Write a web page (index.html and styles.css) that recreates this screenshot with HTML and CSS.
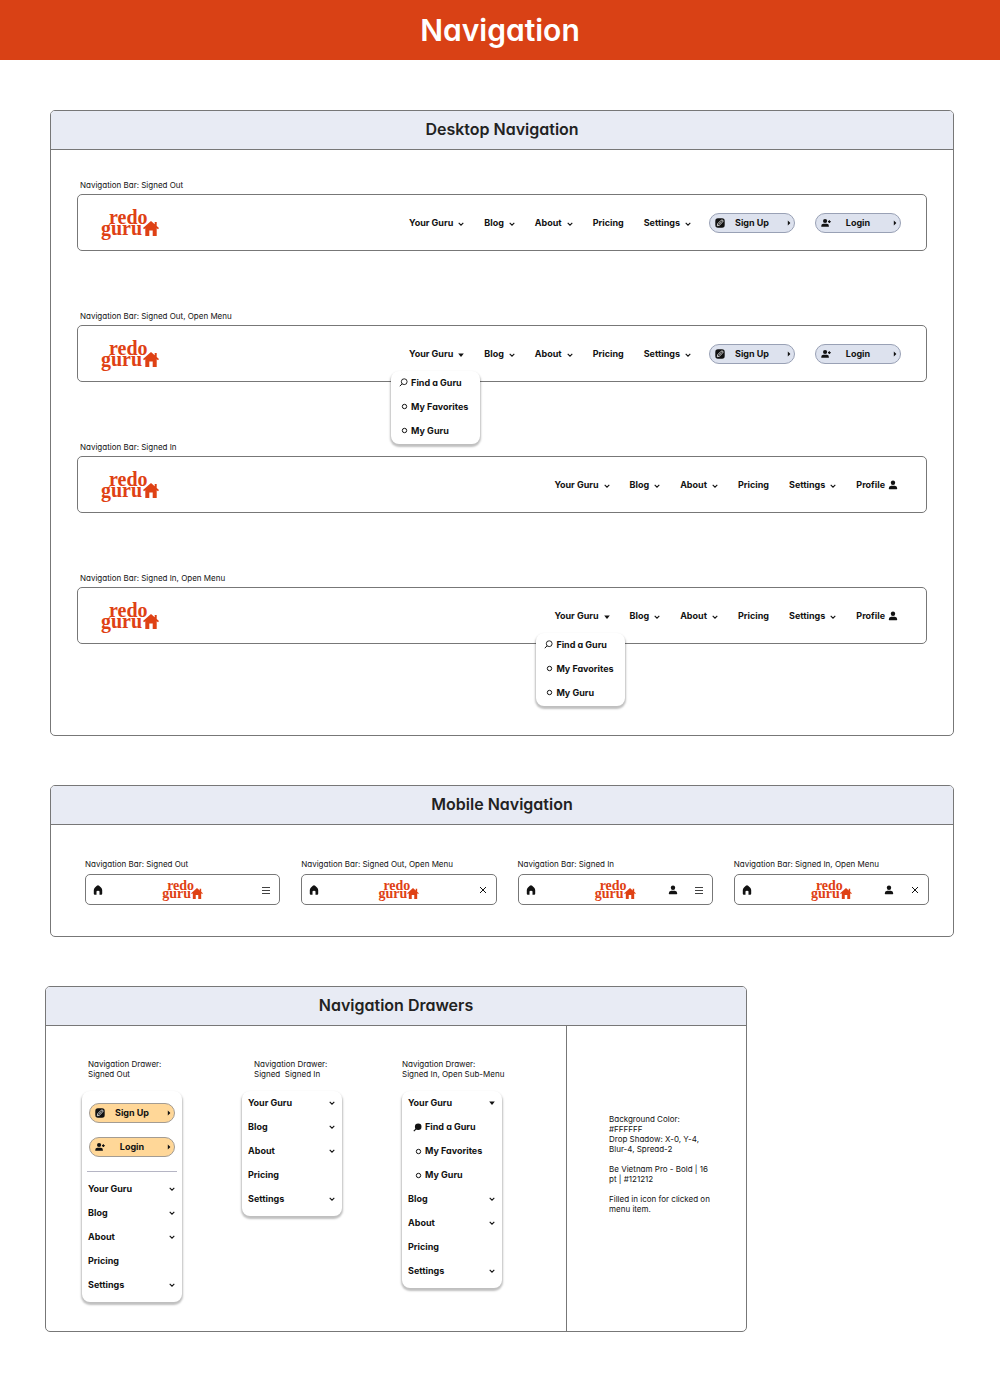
FILE: index.html
```html
<!DOCTYPE html>
<html lang="en">
<head>
<meta charset="utf-8">
<meta name="viewport" content="width=device-width, initial-scale=1">
<title>Navigation</title>
<link rel="stylesheet" href="styles.css">
</head>
<body>
<svg class="sprite" aria-hidden="true">
  <symbol id="chevron" viewBox="0 0 6 6"><path d="M.7 1.8 3 4.2 5.3 1.8" fill="none" stroke="currentColor" stroke-width="1.1"/></symbol>
  <symbol id="caret" viewBox="0 0 6 6"><path d="M.2 1.5h5.6L3 5z" fill="currentColor"/></symbol>
  <symbol id="arrow" viewBox="0 0 4 6"><path d="M.8.6 3.4 3 .8 5.4z" fill="currentColor"/></symbol>
  <symbol id="house" viewBox="0 0 16 15"><path d="M8 0 0 7l1 1.2L2.300 7.200V15h4V9.500h3.400V15h4V7.200L15 8.200 16 7l-2.300-2V1h-2v2.300z" fill="currentColor"/></symbol>
  <symbol id="home" viewBox="0 0 10 10"><path d="M5 .2Q5.800.2 8 2.500 9.200 3.600 9.200 5v3.800q0 1-1 1H6.500V6.500Q6.500 5.800 5 5.800T3.500 6.500v3.300H1.800q-1 0-1-1V5Q.8 3.600 2 2.500 4.200.2 5 .2z" fill="currentColor"/></symbol>
  <symbol id="user" viewBox="0 0 10 10"><circle cx="5" cy="2.800" r="2.200" fill="currentColor"/><path d="M.8 8.200Q.8 5.700 3.200 5.700h3.600q2.400 0 2.400 2.500v.4q0 .6-.6.6H1.400q-.6 0-.6-.6z" fill="currentColor"/></symbol>
  <symbol id="user-add" viewBox="0 0 11 10"><circle cx="4.500" cy="2.800" r="2.300" fill="currentColor"/><path d="M.3 8.200Q.3 5.700 2.700 5.700h3.600q2.400 0 2.400 2.500v.4q0 .6-.6.6H.9q-.6 0-.6-.6z" fill="currentColor"/><path d="M9.200 1.900v3M7.700 3.400h3" stroke="currentColor" stroke-width="1.300"/></symbol>
  <symbol id="edit" viewBox="0 0 10 10"><rect x=".3" y=".3" width="9.400" height="9.400" rx="2.600" fill="currentColor"/><path d="M2.300 7.700 2.800 5.600 6.200 2.200Q7 1.500 7.800 2.300T7.800 3.800L4.400 7.200z" fill="none" stroke="#fff" stroke-width=".8"/><path d="M3.800 6.200 6.500 3.500" stroke="#fff" stroke-width=".5"/></symbol>
  <symbol id="search" viewBox="0 0 9 9"><circle cx="5.200" cy="3.700" r="2.900" fill="none" stroke="currentColor" stroke-width=".9"/><path d="M3.100 5.800.8 8.200" stroke="currentColor" stroke-width="1"/></symbol>
  <symbol id="search-filled" viewBox="0 0 9 9"><circle cx="5.200" cy="3.700" r="3.300" fill="currentColor"/><path d="M3.100 5.800.8 8.200" stroke="currentColor" stroke-width="1.200"/></symbol>
  <symbol id="ring" viewBox="0 0 9 9"><circle cx="5.500" cy="4.500" r="2.200" fill="none" stroke="currentColor" stroke-width="1"/></symbol>
  <symbol id="menu" viewBox="0 0 10 10"><path d="M1 2.500h8M1 5.500h8M1 8.500h8" stroke="currentColor" stroke-width=".8"/></symbol>
  <symbol id="close" viewBox="0 0 10 10"><path d="m2 2 6 6M8 2 2 8" stroke="currentColor" stroke-width="1"/></symbol>
</svg>

<header class="banner"><h1>Navigation</h1></header>

<main class="board">
  <section class="panel panel--wide">
    <h2>Desktop Navigation</h2>
    <div class="desktop">
      <article class="sample">
        <h3>Navigation Bar: Signed Out</h3>
        <nav class="bar">
          <a class="logo" href="#"><span>redo<br>guru</span><svg><use href="#house"/></svg></a>
          <ul class="links">
            <li><button class="item">Your Guru <svg><use href="#chevron"/></svg></button></li>
            <li><button class="item">Blog <svg><use href="#chevron"/></svg></button></li>
            <li><button class="item">About <svg><use href="#chevron"/></svg></button></li>
            <li><a class="item" href="#">Pricing</a></li>
            <li><button class="item">Settings <svg><use href="#chevron"/></svg></button></li>
          </ul>
          <div class="actions">
            <button class="pill"><svg><use href="#edit"/></svg><span>Sign Up</span><svg class="go"><use href="#arrow"/></svg></button>
            <button class="pill"><svg><use href="#user-add"/></svg><span>Login</span><svg class="go"><use href="#arrow"/></svg></button>
          </div>
        </nav>
      </article>
      <article class="sample">
        <h3>Navigation Bar: Signed Out, Open Menu</h3>
        <nav class="bar">
          <a class="logo" href="#"><span>redo<br>guru</span><svg><use href="#house"/></svg></a>
          <ul class="links">
            <li><button class="item" aria-expanded="true">Your Guru <svg><use href="#caret"/></svg></button>
              <ul class="dropdown">
                <li><a href="#"><svg><use href="#search"/></svg>Find a Guru</a></li>
                <li><a href="#"><svg><use href="#ring"/></svg>My Favorites</a></li>
                <li><a href="#"><svg><use href="#ring"/></svg>My Guru</a></li>
              </ul>
            </li>
            <li><button class="item">Blog <svg><use href="#chevron"/></svg></button></li>
            <li><button class="item">About <svg><use href="#chevron"/></svg></button></li>
            <li><a class="item" href="#">Pricing</a></li>
            <li><button class="item">Settings <svg><use href="#chevron"/></svg></button></li>
          </ul>
          <div class="actions">
            <button class="pill"><svg><use href="#edit"/></svg><span>Sign Up</span><svg class="go"><use href="#arrow"/></svg></button>
            <button class="pill"><svg><use href="#user-add"/></svg><span>Login</span><svg class="go"><use href="#arrow"/></svg></button>
          </div>
        </nav>
      </article>
      <article class="sample">
        <h3>Navigation Bar: Signed In</h3>
        <nav class="bar">
          <a class="logo" href="#"><span>redo<br>guru</span><svg><use href="#house"/></svg></a>
          <ul class="links">
            <li><button class="item">Your Guru <svg><use href="#chevron"/></svg></button></li>
            <li><button class="item">Blog <svg><use href="#chevron"/></svg></button></li>
            <li><button class="item">About <svg><use href="#chevron"/></svg></button></li>
            <li><a class="item" href="#">Pricing</a></li>
            <li><button class="item">Settings <svg><use href="#chevron"/></svg></button></li>
            <li><a class="item profile" href="#">Profile <svg><use href="#user"/></svg></a></li>
          </ul>
        </nav>
      </article>
      <article class="sample">
        <h3>Navigation Bar: Signed In, Open Menu</h3>
        <nav class="bar">
          <a class="logo" href="#"><span>redo<br>guru</span><svg><use href="#house"/></svg></a>
          <ul class="links">
            <li><button class="item" aria-expanded="true">Your Guru <svg><use href="#caret"/></svg></button>
              <ul class="dropdown">
                <li><a href="#"><svg><use href="#search"/></svg>Find a Guru</a></li>
                <li><a href="#"><svg><use href="#ring"/></svg>My Favorites</a></li>
                <li><a href="#"><svg><use href="#ring"/></svg>My Guru</a></li>
              </ul>
            </li>
            <li><button class="item">Blog <svg><use href="#chevron"/></svg></button></li>
            <li><button class="item">About <svg><use href="#chevron"/></svg></button></li>
            <li><a class="item" href="#">Pricing</a></li>
            <li><button class="item">Settings <svg><use href="#chevron"/></svg></button></li>
            <li><a class="item profile" href="#">Profile <svg><use href="#user"/></svg></a></li>
          </ul>
        </nav>
      </article>
    </div>
  </section>

  <section class="panel panel--wide">
    <h2>Mobile Navigation</h2>
    <div class="mobile">
      <article>
        <h3>Navigation Bar: Signed Out</h3>
        <nav class="phone-bar">
          <a class="icon" href="#" aria-label="Home"><svg><use href="#home"/></svg></a>
          <a class="logo logo--small" href="#"><span>redo<br>guru</span><svg><use href="#house"/></svg></a>
          <div class="tools"><button class="icon" aria-label="Open menu"><svg><use href="#menu"/></svg></button></div>
        </nav>
      </article>
      <article>
        <h3>Navigation Bar: Signed Out, Open Menu</h3>
        <nav class="phone-bar">
          <a class="icon" href="#" aria-label="Home"><svg><use href="#home"/></svg></a>
          <a class="logo logo--small" href="#"><span>redo<br>guru</span><svg><use href="#house"/></svg></a>
          <div class="tools"><button class="icon" aria-label="Close menu"><svg><use href="#close"/></svg></button></div>
        </nav>
      </article>
      <article>
        <h3>Navigation Bar: Signed In</h3>
        <nav class="phone-bar">
          <a class="icon" href="#" aria-label="Home"><svg><use href="#home"/></svg></a>
          <a class="logo logo--small" href="#"><span>redo<br>guru</span><svg><use href="#house"/></svg></a>
          <div class="tools"><a class="icon" href="#" aria-label="Profile"><svg><use href="#user"/></svg></a><button class="icon" aria-label="Open menu"><svg><use href="#menu"/></svg></button></div>
        </nav>
      </article>
      <article>
        <h3>Navigation Bar: Signed In, Open Menu</h3>
        <nav class="phone-bar">
          <a class="icon" href="#" aria-label="Home"><svg><use href="#home"/></svg></a>
          <a class="logo logo--small" href="#"><span>redo<br>guru</span><svg><use href="#house"/></svg></a>
          <div class="tools"><a class="icon" href="#" aria-label="Profile"><svg><use href="#user"/></svg></a><button class="icon" aria-label="Close menu"><svg><use href="#close"/></svg></button></div>
        </nav>
      </article>
    </div>
  </section>

  <section class="panel panel--drawers">
    <h2>Navigation Drawers</h2>
    <div class="split">
      <div class="drawers">
        <article>
          <h3 class="inset">Navigation Drawer:<br>Signed Out</h3>
          <nav class="drawer">
            <div class="signin">
              <button class="pill pill--warm"><svg><use href="#edit"/></svg><span>Sign Up</span><svg class="go"><use href="#arrow"/></svg></button>
              <button class="pill pill--warm"><svg><use href="#user-add"/></svg><span>Login</span><svg class="go"><use href="#arrow"/></svg></button>
            </div>
            <ul>
              <li><button class="row">Your Guru <svg><use href="#chevron"/></svg></button></li>
              <li><button class="row">Blog <svg><use href="#chevron"/></svg></button></li>
              <li><button class="row">About <svg><use href="#chevron"/></svg></button></li>
              <li><a class="row" href="#">Pricing</a></li>
              <li><button class="row">Settings <svg><use href="#chevron"/></svg></button></li>
            </ul>
          </nav>
        </article>
        <article>
          <h3 class="inset-large">Navigation Drawer:<br>Signed&nbsp; Signed In</h3>
          <nav class="drawer">
            <ul>
              <li><button class="row">Your Guru <svg><use href="#chevron"/></svg></button></li>
              <li><button class="row">Blog <svg><use href="#chevron"/></svg></button></li>
              <li><button class="row">About <svg><use href="#chevron"/></svg></button></li>
              <li><a class="row" href="#">Pricing</a></li>
              <li><button class="row">Settings <svg><use href="#chevron"/></svg></button></li>
            </ul>
          </nav>
        </article>
        <article>
          <h3>Navigation Drawer:<br>Signed In, Open Sub-Menu</h3>
          <nav class="drawer">
            <ul>
              <li><button class="row" aria-expanded="true">Your Guru <svg><use href="#caret"/></svg></button>
                <ul class="submenu">
                  <li><a href="#"><svg><use href="#search-filled"/></svg>Find a Guru</a></li>
                  <li><a href="#"><svg><use href="#ring"/></svg>My Favorites</a></li>
                  <li><a href="#"><svg><use href="#ring"/></svg>My Guru</a></li>
                </ul>
              </li>
              <li><button class="row">Blog <svg><use href="#chevron"/></svg></button></li>
              <li><button class="row">About <svg><use href="#chevron"/></svg></button></li>
              <li><a class="row" href="#">Pricing</a></li>
              <li><button class="row">Settings <svg><use href="#chevron"/></svg></button></li>
            </ul>
          </nav>
        </article>
      </div>
      <aside class="notes">
        <p>Background Color:<br>#FFFFFF<br>Drop Shadow: X-0, Y-4,<br>Blur-4, Spread-2</p>
        <p>Be Vietnam Pro - Bold | 16<br>pt | #121212</p>
        <p>Filled in icon for clicked on<br>menu item.</p>
      </aside>
    </div>
  </section>
</main>
</body>
</html>
```
FILE: styles.css
```css
* { box-sizing: border-box; }

body {
  margin: 0;
  background: #fff;
  color: #121212;
  font: 400 8px/10px Inter, "Liberation Sans", sans-serif;
  font-feature-settings: "cv11";
}

h1, h2, h3, p, ul { margin: 0; padding: 0; }
ul { list-style: none; }
a { color: inherit; text-decoration: none; }
svg { flex: none; display: block; }
button {
  padding: 0;
  border: 0;
  background: none;
  color: inherit;
  font: inherit;
  font-feature-settings: inherit;
  cursor: pointer;
}
.sprite { position: absolute; width: 0; height: 0; }

.banner {
  display: flex;
  align-items: center;
  justify-content: center;
  height: 60px;
  background: #d94115;
  color: #fff;
}
.banner h1 { font-size: 30px; font-weight: 600; line-height: 36px; }

.board {
  display: flex;
  flex-direction: column;
  gap: 49px;
  padding: 50px 46px 47px 45px;
}

.panel { border: 1px solid #777; border-radius: 5px; }
.panel--wide { margin-left: 5px; }
.panel--drawers { width: 100%; max-width: 702px; }
.panel h2 {
  height: 39px;
  border-bottom: 1px solid #777;
  border-radius: 4px 4px 0 0;
  background: #e8ebf4;
  color: #222;
  font-size: 16px;
  font-weight: 600;
  line-height: 37px;
  text-align: center;
}
h3 { font-size: 8px; font-weight: 400; line-height: 10px; white-space: nowrap; }

/* Logo */
.logo {
  display: flex;
  align-items: flex-end;
  color: #df4114;
  font: 700 20px/11px "Liberation Serif", serif;
}
.logo span { text-indent: 8px; }
.logo svg { width: 16px; height: 15px; margin: 0 0 -2px -5px; }
.logo--small { font-size: 14px; line-height: 8px; }
.logo--small span { text-indent: 5px; }
.logo--small svg { width: 12px; height: 11px; margin: 0 0 -1px -3px; }

/* Desktop bars */
.desktop {
  display: flex;
  flex-direction: column;
  gap: 60px;
  padding: 30px 26px 91px;
}
.sample h3 { padding: 0 3px 4px; }
.bar {
  display: flex;
  align-items: center;
  height: 57px;
  padding: 0 25px 0 23px;
  border: 1px solid #777;
  border-radius: 5px;
}
.links {
  display: flex;
  gap: 20px;
  margin-left: auto;
  font-size: 9px;
  font-weight: 700;
  line-height: 12px;
}
.links:last-child { margin-right: 3px; }
.links > li { position: relative; }
.item { display: flex; align-items: center; gap: 5px; }
.item svg { width: 6px; height: 6px; margin-top: 3px; }
.profile { gap: 3px; }
.profile svg { width: 10px; height: 10px; margin: 0; }
.actions { display: flex; gap: 20px; margin-left: 18px; }

.pill {
  display: grid;
  grid-template-columns: 12px 1fr 12px;
  align-items: center;
  width: 86px;
  height: 20px;
  padding: 0 3px;
  border: 1px solid #99a1b5;
  border-radius: 10px;
  background: #dde2ee;
  font-size: 9px;
  font-weight: 700;
}
.pill svg { justify-self: end; width: 10px; height: 10px; }
.pill .go { width: 4px; height: 6px; }
.pill--warm { border-color: #a39c93; background: #ffd798; }

.dropdown, .drawer {
  border-radius: 8px;
  background: #fff;
  box-shadow: 0 2px 2px 1px rgba(0, 0, 0, .25);
}
.dropdown {
  position: absolute;
  top: 23px;
  left: -18px;
  width: 89px;
  padding-bottom: 1px;
}
.dropdown a, .submenu a {
  display: flex;
  align-items: center;
  gap: 3px;
  height: 24px;
  white-space: nowrap;
}
.dropdown a { padding-left: 8px; }
.dropdown svg, .submenu svg { width: 9px; height: 9px; }

/* Mobile bars */
.mobile {
  display: grid;
  grid-template-columns: repeat(4, 1fr);
  gap: 21px;
  padding: 34px 24px 31px 34px;
}
.mobile h3 { height: 15px; }
.phone-bar {
  display: grid;
  grid-template-columns: 1fr auto 1fr;
  align-items: center;
  height: 31px;
  padding: 0 7px;
  border: 1px solid #777;
  border-radius: 5px;
}
.icon svg { width: 10px; height: 10px; }
.tools { display: flex; justify-content: flex-end; gap: 16px; padding-right: 1px; }

/* Drawers */
.split { display: grid; grid-template-columns: 1fr 180px; }
.drawers {
  display: grid;
  grid-template-columns: repeat(3, 100px);
  gap: 60px;
  padding: 33px 0 29px 36px;
}
.drawers h3 { height: 32px; }
.inset { padding-left: 6px; }
.inset-large { padding-left: 12px; }
.drawer { padding-bottom: 5px; font-size: 9px; font-weight: 700; }
.signin {
  display: grid;
  gap: 14px;
  margin: 0 5px 5px;
  padding: 12px 2px 14px;
  border-bottom: 1px solid #b5b5c4;
}
.row {
  display: flex;
  align-items: center;
  justify-content: space-between;
  width: 100%;
  height: 24px;
  padding: 0 7px 0 6px;
}
.row svg { width: 6px; height: 6px; }
.submenu a { padding-left: 11px; }

.notes {
  display: flex;
  flex-direction: column;
  gap: 10px;
  padding: 88px 0 0 42px;
  border-left: 1px solid #777;
}
```
